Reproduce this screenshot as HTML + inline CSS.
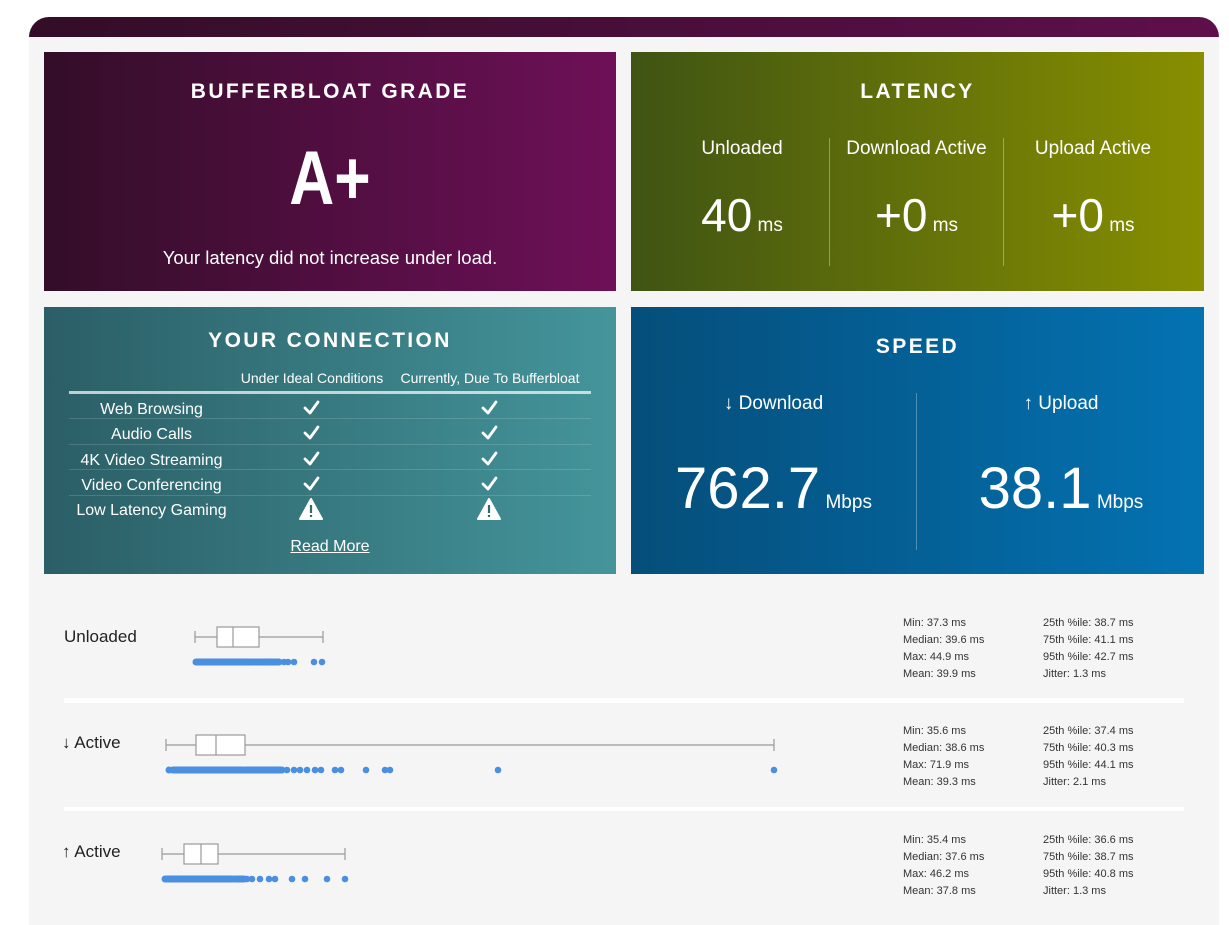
<!DOCTYPE html>
<html><head><meta charset="utf-8"><style>
*{margin:0;padding:0;box-sizing:border-box}
body{width:1229px;height:925px;background:#fff;position:relative;overflow:hidden;font-family:"Liberation Sans",sans-serif;color:#fff}
.a{position:absolute}
.c{text-align:center}
.top{left:29px;top:17px;width:1190px;height:20px;border-radius:20px 20px 0 0;background:linear-gradient(90deg,#330d27,#5e0f4b)}
.bg{left:29px;top:37px;width:1190px;height:888px;background:#f5f5f5}
.card{position:absolute}
h2{position:absolute;left:0;right:0;text-align:center;font-family:"Liberation Sans",sans-serif;font-weight:bold;font-size:21px;letter-spacing:2.4px}
.st{font-size:11px;color:#333;line-height:17px}
.lbl{font-size:17px;color:#222}
</style></head><body>
<div class="a top"></div>
<div class="a bg"></div>

<div class="card" style="left:44px;top:52px;width:572px;height:239px;background:linear-gradient(90deg,#330d28,#6e1058)">
<h2 style="top:28px">BUFFERBLOAT GRADE</h2>
<div class="a c" style="left:0;right:0;top:82px;font-weight:bold;font-size:76px;line-height:90px;transform:scaleX(0.82)">A+</div>
<div class="a c" style="left:0;right:0;top:195px;font-size:18.5px">Your latency did not increase under load.</div>
</div>

<div class="card" style="left:631px;top:52px;width:573px;height:239px;background:linear-gradient(90deg,#3f5413,#888f00)">
<h2 style="top:28px">LATENCY</h2>
<div class="a" style="left:198px;top:86px;width:1px;height:128px;background:rgba(255,255,255,.35)"></div>
<div class="a" style="left:372px;top:86px;width:1px;height:128px;background:rgba(255,255,255,.35)"></div>
<div class="a c" style="left:22px;width:178px;top:86px;font-size:19px">Unloaded</div>
<div class="a c" style="left:199px;width:173px;top:86px;font-size:19px">Download Active</div>
<div class="a c" style="left:373px;width:178px;top:86px;font-size:19px">Upload Active</div>
<div class="a c" style="left:22px;width:178px;top:136px;font-size:46px">40<span style="font-size:19px"> ms</span></div>
<div class="a c" style="left:199px;width:173px;top:136px;font-size:46px">+0<span style="font-size:19px"> ms</span></div>
<div class="a c" style="left:373px;width:178px;top:136px;font-size:46px">+0<span style="font-size:19px"> ms</span></div>
</div>

<div class="card" style="left:44px;top:307px;width:572px;height:267px;background:linear-gradient(90deg,#2b5e66,#44959b)">
<h2 style="top:22px">YOUR CONNECTION</h2>
<div class="a c" style="left:188px;width:160px;top:63px;font-size:14px">Under Ideal Conditions</div>
<div class="a c" style="left:350px;width:192px;top:63px;font-size:14px">Currently, Due To Bufferbloat</div>
<div class="a" style="left:25px;width:522px;top:84px;height:3px;background:rgba(255,255,255,.7)"></div>
<div class="a" style="left:25px;width:522px;top:111px;height:1px;background:rgba(255,255,255,.15)"></div>
<div class="a" style="left:25px;width:522px;top:137px;height:1px;background:rgba(255,255,255,.15)"></div>
<div class="a" style="left:25px;width:522px;top:162px;height:1px;background:rgba(255,255,255,.15)"></div>
<div class="a" style="left:25px;width:522px;top:188px;height:1px;background:rgba(255,255,255,.15)"></div>
<div class="a c" style="left:25px;width:165px;top:90px;font-size:16px;line-height:25.3px">Web Browsing<br>Audio Calls<br>4K Video Streaming<br>Video Conferencing<br>Low Latency Gaming</div>
<svg class="a" style="left:0;top:0" width="572" height="267">
<g fill="none" stroke="#fff" stroke-width="2.8" stroke-linecap="round" stroke-linejoin="round">
<path d="M261 101l5 5 8-11M439 101l5 5 8-11"/>
<path d="M261 126l5 5 8-11M439 126l5 5 8-11"/>
<path d="M261 152l5 5 8-11M439 152l5 5 8-11"/>
<path d="M261 177l5 5 8-11M439 177l5 5 8-11"/>
</g>
<path d="M267 192l11 20h-22z M445 192l11 20h-22z" fill="#fff" stroke="#fff" stroke-linejoin="round" stroke-width="2"/>
<path d="M267 198v8M267 208v2M445 198v8M445 208v2" stroke="#2f6a70" stroke-width="2.2"/>
</svg>
<div class="a c" style="left:0;right:0;top:231px;font-size:16px;text-decoration:underline">Read More</div>
</div>

<div class="card" style="left:631px;top:307px;width:573px;height:267px;background:linear-gradient(90deg,#054e7a,#0472b2)">
<h2 style="top:28px">SPEED</h2>
<div class="a" style="left:285px;top:86px;width:1px;height:157px;background:rgba(255,255,255,.3)"></div>
<div class="a c" style="left:20px;width:245px;top:86px;font-size:19px">↓ Download</div>
<div class="a c" style="left:300px;width:260px;top:86px;font-size:19px">↑ Upload</div>
<div class="a c" style="left:20px;width:245px;top:148px;font-size:58px">762.7<span style="font-size:19px"> Mbps</span></div>
<div class="a c" style="left:300px;width:260px;top:148px;font-size:58px">38.1<span style="font-size:19px"> Mbps</span></div>
</div>

<div class="a lbl" style="left:64px;top:627px">Unloaded</div>
<div class="a lbl" style="left:62px;top:733px">↓ Active</div>
<div class="a lbl" style="left:62px;top:842px">↑ Active</div>
<div class="a" style="left:64px;top:698px;width:1120px;height:5px;background:#fff"></div>
<div class="a" style="left:64px;top:807px;width:1120px;height:4px;background:#fff"></div>

<svg class="a" style="left:0;top:0" width="1229" height="925">
<g stroke="#999" stroke-width="1.2" fill="#fff">
<path d="M195 637h128M195 631v12M323 631v12"/><rect x="217" y="627" width="42" height="20"/><path d="M233 627v20"/>
<path d="M166 745h608M166 739v12M774 739v12"/><rect x="196" y="735" width="49" height="20"/><path d="M216 735v20"/>
<path d="M162 854h183M162 848v12M345 848v12"/><rect x="184" y="844" width="34" height="20"/><path d="M201 844v20"/>
</g>
<g stroke="#4a8fe0" stroke-width="7" stroke-linecap="round">
<path d="M196 662h59M257 662h22"/>
<path d="M169 770h0M173 770h70M245 770h37"/>
<path d="M165 879h68M235 879h9"/>
</g>
<g fill="#4a8fe0">
<circle cx="284" cy="662" r="3.3"/><circle cx="288" cy="662" r="3.3"/><circle cx="294" cy="662" r="3.3"/><circle cx="314" cy="662" r="3.3"/><circle cx="322" cy="662" r="3.3"/>
<circle cx="287" cy="770" r="3.3"/><circle cx="294" cy="770" r="3.3"/><circle cx="300" cy="770" r="3.3"/><circle cx="307" cy="770" r="3.3"/><circle cx="315" cy="770" r="3.3"/><circle cx="321" cy="770" r="3.3"/><circle cx="335" cy="770" r="3.3"/><circle cx="341" cy="770" r="3.3"/><circle cx="366" cy="770" r="3.3"/><circle cx="385" cy="770" r="3.3"/><circle cx="390" cy="770" r="3.3"/><circle cx="498" cy="770" r="3.3"/><circle cx="774" cy="770" r="3.3"/>
<circle cx="247" cy="879" r="3.3"/><circle cx="252" cy="879" r="3.3"/><circle cx="260" cy="879" r="3.3"/><circle cx="269" cy="879" r="3.3"/><circle cx="275" cy="879" r="3.3"/><circle cx="292" cy="879" r="3.3"/><circle cx="305" cy="879" r="3.3"/><circle cx="327" cy="879" r="3.3"/><circle cx="345" cy="879" r="3.3"/>
</g>
</svg>

<div class="a st" style="left:903px;top:615px">Min: 37.3 ms<br>Median: 39.6 ms<br>Max: 44.9 ms<br>Mean: 39.9 ms</div>
<div class="a st" style="left:1043px;top:615px">25th %ile: 38.7 ms<br>75th %ile: 41.1 ms<br>95th %ile: 42.7 ms<br>Jitter: 1.3 ms</div>
<div class="a st" style="left:903px;top:723px">Min: 35.6 ms<br>Median: 38.6 ms<br>Max: 71.9 ms<br>Mean: 39.3 ms</div>
<div class="a st" style="left:1043px;top:723px">25th %ile: 37.4 ms<br>75th %ile: 40.3 ms<br>95th %ile: 44.1 ms<br>Jitter: 2.1 ms</div>
<div class="a st" style="left:903px;top:832px">Min: 35.4 ms<br>Median: 37.6 ms<br>Max: 46.2 ms<br>Mean: 37.8 ms</div>
<div class="a st" style="left:1043px;top:832px">25th %ile: 36.6 ms<br>75th %ile: 38.7 ms<br>95th %ile: 40.8 ms<br>Jitter: 1.3 ms</div>
</body></html>
